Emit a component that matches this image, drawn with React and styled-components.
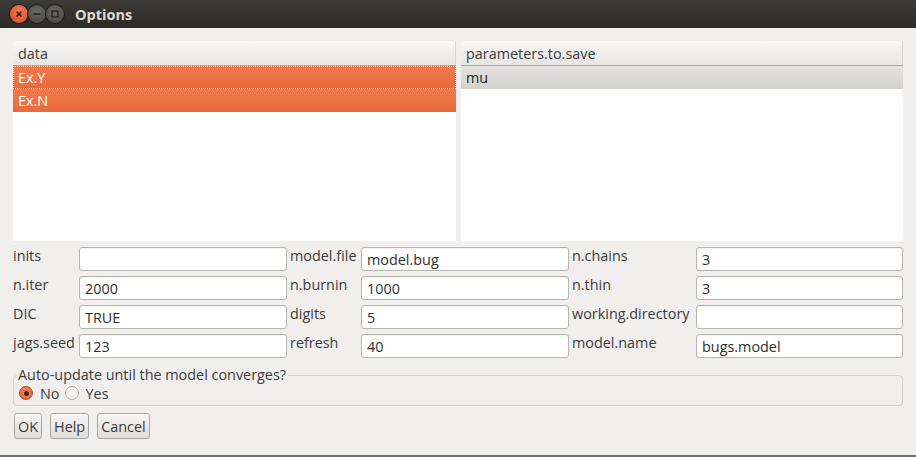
import React from "react";
import styled, { createGlobalStyle } from "styled-components";

const GlobalStyle = createGlobalStyle`
  html, body {
    margin: 0;
    padding: 0;
    background: #f0efed;
  }
  * { box-sizing: border-box; }
`;

const Window = styled.div`
  width: 916px;
  height: 457px;
  display: flex;
  flex-direction: column;
  background: #f0efed;
  font-family: "Open Sans", "DejaVu Sans", sans-serif;
  font-size: 14.4px;
  color: #3c3c3c;
  overflow: hidden;
  border-bottom: 2px solid #6e6e6c;
`;

const TitleBar = styled.div`
  height: 28px;
  flex: none;
  display: flex;
  align-items: center;
  padding-left: 10px;
  background: linear-gradient(#3c3b37, #2b2a27);
`;

const WinButton = styled.span`
  width: 18px;
  height: 18px;
  border-radius: 50%;
  display: flex;
  align-items: center;
  justify-content: center;
  background: ${(p) =>
    p.$close
      ? "radial-gradient(circle at 50% 35%, #f37b55, #d9491f)"
      : "radial-gradient(circle at 50% 35%, #6a6964, #44433f)"};
  box-shadow: 0 0 0 1px #1f1e1c;
`;

const Title = styled.span`
  margin-left: 11px;
  font-weight: 700;
  font-size: 14.5px;
  color: #dfdbd2;
`;

const Body = styled.div`
  flex: 1;
  display: flex;
  flex-direction: column;
  padding: 13px 13px 0 13px;
`;

const Lists = styled.div`
  display: grid;
  grid-template-columns: 443px 442px;
  column-gap: 5px;
  height: 200px;
`;

const List = styled.div`
  background: #ffffff;
  display: flex;
  flex-direction: column;
`;

const Header = styled.div`
  height: 25px;
  flex: none;
  display: flex;
  align-items: center;
  padding-left: 5px;
  color: #3c3c3c;
  background: linear-gradient(#f7f7f6, #e7e6e4);
  border-bottom: 1px solid #a8a7a4;
  box-shadow: inset -1px 0 0 #d8d7d4;
`;

const Row = styled.div`
  height: 23px;
  display: flex;
  align-items: center;
  padding-left: 5px;
  color: ${(p) => (p.$active ? "#ffffff" : "#1e1e1e")};
  background: ${(p) =>
    p.$active
      ? "linear-gradient(#f07c4f, #e8693c)"
      : "linear-gradient(#e4e3e1, #d2d1ce)"};
  outline: ${(p) => (p.$focus ? "1px dotted #f6d2c2" : "none")};
  outline-offset: -1px;
`;

const Form = styled.div`
  display: flex;
  flex-direction: column;
  gap: 5px;
  margin-top: 6px;
`;

const FieldRow = styled.div`
  display: flex;
  height: 24px;
`;

const Label = styled.div`
  width: ${(p) => p.$w}px;
  flex: none;
  padding-left: ${(p) => (p.$inset ? "3px" : "0")};
  line-height: 18px;
  color: #3c3c3c;
  white-space: nowrap;
`;

const Entry = styled.div`
  width: ${(p) => p.$w}px;
  flex: none;
  height: 24px;
  border: 1px solid #b7b5b0;
  border-radius: 3px;
  background: #ffffff;
  box-shadow: inset 0 1px 1px rgba(0, 0, 0, 0.06);
  padding: 3px 0 0 5px;
  line-height: 18px;
  color: #2e2e2e;
`;

const Frame = styled.fieldset`
  margin: 8px 0 0 0;
  padding: 0 4px 3px 3px;
  border: 1px solid #d3d2ce;
  border-radius: 4px;
  display: flex;
  align-items: center;
`;

const Legend = styled.legend`
  padding: 0 1px;
  line-height: 18px;
  color: #3c3c3c;
`;

const RadioGroup = styled.div`
  display: flex;
  align-items: center;
  height: 18px;
`;

const Radio = styled.span`
  width: 14px;
  height: 14px;
  border-radius: 50%;
  display: inline-flex;
  align-items: center;
  justify-content: center;
  margin: 0 7px 0 2px;
  border: 1px solid ${(p) => (p.$checked ? "#b24a22" : "#a8a6a1")};
  background: ${(p) =>
    p.$checked
      ? "radial-gradient(circle at 50% 40%, #f2875e, #e2622f)"
      : "linear-gradient(#ffffff, #efeeec)"};

  &::after {
    content: "";
    width: 5px;
    height: 5px;
    border-radius: 50%;
    background: ${(p) => (p.$checked ? "#4a2316" : "transparent")};
  }
`;

const RadioText = styled.span`
  margin-right: 3px;
`;

const Buttons = styled.div`
  display: flex;
  gap: 8px;
  margin-top: 7px;
  padding-left: 1px;
`;

const Button = styled.button`
  height: 26px;
  padding: 0 3px;
  font-family: inherit;
  font-size: 14.4px;
  color: #3c3c3c;
  border: 1px solid #a8a6a1;
  border-radius: 3px;
  background: linear-gradient(#f6f5f3, #dfdedb);
  box-shadow: inset 0 1px 0 #ffffff;
`;

const fields = [
  ["inits", "", "model.file", "model.bug", "n.chains", "3"],
  ["n.iter", "2000", "n.burnin", "1000", "n.thin", "3"],
  ["DIC", "TRUE", "digits", "5", "working.directory", ""],
  ["jags.seed", "123", "refresh", "40", "model.name", "bugs.model"],
];

const Glyph = ({ kind }) => (
  <svg width="10" height="10" viewBox="0 0 10 10">
    {kind === "close" && (
      <path d="M2.5 2.5 L7.5 7.5 M7.5 2.5 L2.5 7.5" stroke="#3a1a10" strokeWidth="1.6" />
    )}
    {kind === "min" && <path d="M1.5 5 H8.5" stroke="#262522" strokeWidth="1.6" />}
    {kind === "max" && (
      <rect x="2" y="2" width="6" height="6" fill="none" stroke="#262522" strokeWidth="1.4" />
    )}
  </svg>
);

const App = () => {
  return (
    <Window>
      <GlobalStyle />
      <TitleBar>
        <WinButton $close>
          <Glyph kind="close" />
        </WinButton>
        <WinButton>
          <Glyph kind="min" />
        </WinButton>
        <WinButton>
          <Glyph kind="max" />
        </WinButton>
        <Title>Options</Title>
      </TitleBar>
      <Body>
        <Lists>
          <List>
            <Header>data</Header>
            <Row $active $focus>Ex.Y</Row>
            <Row $active>Ex.N</Row>
          </List>
          <List>
            <Header>parameters.to.save</Header>
            <Row>mu</Row>
          </List>
        </Lists>
        <Form>
          {fields.map((r) => (
            <FieldRow key={r[0]}>
              <Label $w={66}>{r[0]}</Label>
              <Entry $w={208}>{r[1]}</Entry>
              <Label $w={74} $inset>{r[2]}</Label>
              <Entry $w={208}>{r[3]}</Entry>
              <Label $w={127} $inset>{r[4]}</Label>
              <Entry $w={207}>{r[5]}</Entry>
            </FieldRow>
          ))}
        </Form>
        <Frame>
          <Legend>Auto-update until the model converges?</Legend>
          <RadioGroup>
            <Radio $checked />
            <RadioText>No</RadioText>
            <Radio />
            <RadioText>Yes</RadioText>
          </RadioGroup>
        </Frame>
        <Buttons>
          <Button>OK</Button>
          <Button>Help</Button>
          <Button>Cancel</Button>
        </Buttons>
      </Body>
    </Window>
  );
};

export default App;
